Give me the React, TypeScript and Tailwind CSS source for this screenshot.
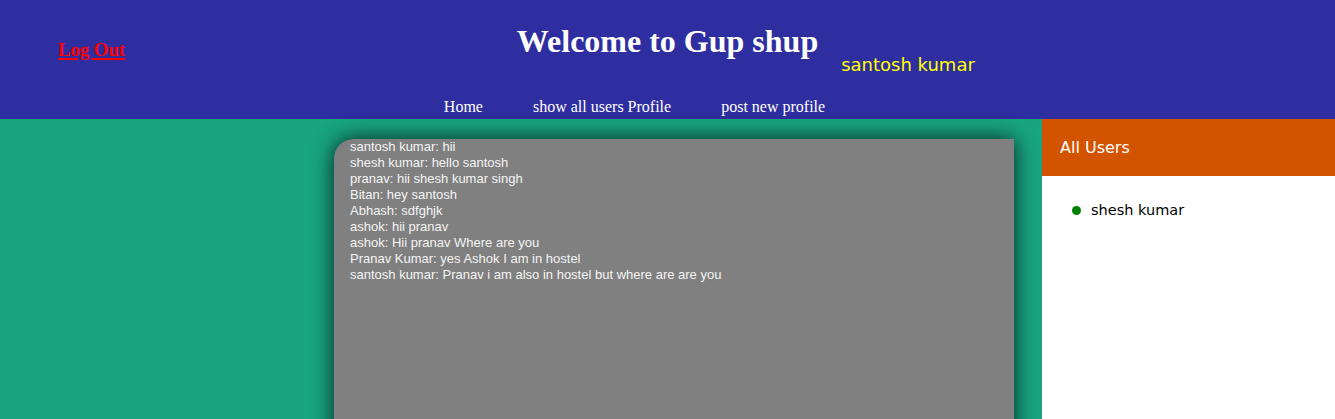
import React from "react";

const messages = [
  "santosh kumar: hii",
  "shesh kumar: hello santosh",
  "pranav: hii shesh kumar singh",
  "Bitan: hey santosh",
  "Abhash: sdfghjk",
  "ashok: hii pranav",
  "ashok: Hii pranav Where are you",
  "Pranav Kumar: yes Ashok I am in hostel",
  "santosh kumar: Pranav i am also in hostel but where are are you",
];

export default function App() {
  const serif = { fontFamily: '"Liberation Serif", "Times New Roman", serif' };
  const comic = { fontFamily: '"DejaVu Sans", "Comic Sans MS", sans-serif' };
  return (
    <div className="w-[1335px] h-[419px] overflow-hidden flex flex-col">
      <header className="bg-[#2f2ea0] h-[119px] flex flex-col shrink-0">
        <div className="grid grid-cols-[1fr_auto_1fr] h-[98px]">
          <div className="pt-[38px] pl-[58px]">
            <a
              href="#"
              style={serif}
              className="text-[18.72px] leading-[22px] font-bold text-[#ff0000] underline decoration-[#ff0000] decoration-2 underline-offset-2"
            >
              Log Out
            </a>
          </div>
          <h1
            style={serif}
            className="pt-[23px] text-[32px] leading-[37px] font-bold text-white"
          >
            Welcome to Gup shup
          </h1>
          <div className="pt-[53px] pl-[23px]">
            <span style={comic} className="text-[18px] leading-[21px] text-[#ffff00]">
              santosh kumar
            </span>
          </div>
        </div>
        <nav
          style={serif}
          className="flex justify-center gap-[50px] pr-[66px] text-[16px] leading-[18px] text-white"
        >
          <a href="#">Home</a>
          <a href="#">show all users Profile</a>
          <a href="#">post new profile</a>
        </nav>
      </header>
      <main className="flex flex-1 min-h-0">
        <section className="flex-1 bg-[#18a582] pl-[334px] pr-[28px] pt-[20px]">
          <div
            style={{ fontFamily: '"Liberation Sans", Arial, sans-serif' }}
            className="h-[420px] bg-[#808080] rounded-tl-[20px] shadow-[0_0_22px_rgba(0,0,0,0.8)] px-[16px] text-[13px] leading-[16px] text-[#f4f4f4]"
          >
            {messages.map((m, i) => (
              <div key={i}>{m}</div>
            ))}
          </div>
        </section>
        <aside className="w-[293px] bg-white flex flex-col" style={comic}>
          <div className="h-[57px] bg-[#d35400] flex items-center pl-[18px] text-white text-[16px]">
            All Users
          </div>
          <ul className="pl-[30px] pt-[24px]">
            <li className="flex items-center gap-[10px] text-[14.5px] text-black">
              <span className="w-[9px] h-[9px] rounded-full bg-[#008000]" />
              shesh kumar
            </li>
          </ul>
        </aside>
      </main>
    </div>
  );
}
